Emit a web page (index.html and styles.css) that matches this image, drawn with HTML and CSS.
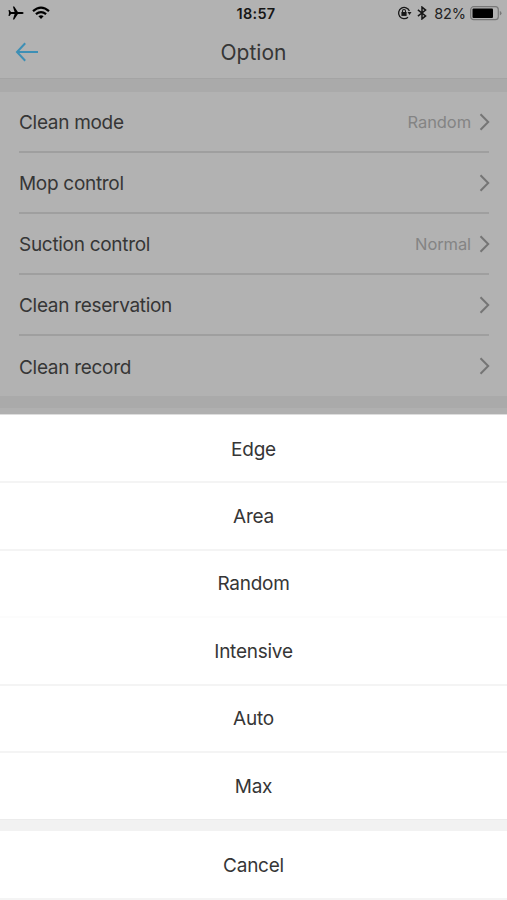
FILE: index.html
```
<!DOCTYPE html>
<html lang="en">
<head>
<meta charset="utf-8">
<meta name="viewport" content="width=device-width, initial-scale=1">
<title>Option</title>
<link rel="stylesheet" href="styles.css">
</head>
<body>
<div class="screen">
  <header class="header">
    <div class="status">
      <div class="status-left">
        <svg width="16" height="14" viewBox="0 0 16 14"><path d="M15.6 7q0-.9-1.5-.9H9.9L6.200.5H4.900L6.600 6.100H3L1.500 4H.5L1 7l-.5 3h1L3 7.900h3.600L4.900 13.500h1.300L9.900 7.900h4.200q1.500 0 1.500-.9z"/></svg>
        <svg width="18" height="14" viewBox="0 0 18 14" fill="none" stroke="#000" stroke-width="2.200"><path d="M1 5.100Q9-1.900 17 5.100M3.900 8.200q5.100-4.300 10.200 0"/><path d="M6.400 10.200q2.600-2 5.200 0L9 12.900z" fill="#000" stroke="none"/></svg>
      </div>
      <div class="clock">18:57</div>
      <div class="status-right">
        <svg class="lock" width="15" height="14" viewBox="0 0 15 14" fill="none" stroke="#161616" stroke-width="1.300"><path d="M12.400 5A5.600 5.600 0 1 0 11 11.200"/><path d="M10.500 6h4L12.500 9z" fill="#161616" stroke="none"/><path d="M4.400 6h5.200v3.900H4.400z" fill="#161616" stroke="none"/><path d="M5.500 6.300V5a1.500 1.500 0 0 1 3 0v1.300" stroke-width="1.100"/></svg>
        <svg class="bluetooth" width="10" height="14" viewBox="0 0 10 14" fill="none" stroke="#161616" stroke-width="1.500"><path d="M.9 3.900l7.700 6L5 12.900V1.100l3.600 3-7.700 6"/></svg>
        <span class="percent">82%</span>
        <svg class="battery" width="32" height="15" viewBox="0 0 32 15"><rect x=".7" y=".7" width="27.600" height="13" rx="3" fill="none" stroke="#777" stroke-width="1.200"/><rect x="2.500" y="2.500" width="20.500" height="9.500" rx="1"/><path d="M29.800 5q1.700.6 1.700 2.200t-1.700 2.200z" fill="#777"/></svg>
      </div>
    </div>
    <div class="nav">
      <svg class="back" width="24" height="20" viewBox="0 0 24 20"><path d="M23 10H2.500M10.200 1.300L2 10l8.200 8.700"/></svg>
      <h1 class="title">Option</h1>
    </div>
  </header>
  <main class="settings">
    <div class="row"><span class="label">Clean mode</span><span class="value">Random</span><svg class="chevron" width="11" height="18" viewBox="0 0 11 18"><path d="M1.500 1.300L9.200 9l-7.700 7.700"/></svg></div>
    <div class="row"><span class="label">Mop control</span><span class="value"></span><svg class="chevron" width="11" height="18" viewBox="0 0 11 18"><path d="M1.500 1.300L9.200 9l-7.700 7.700"/></svg></div>
    <div class="row"><span class="label">Suction control</span><span class="value">Normal</span><svg class="chevron" width="11" height="18" viewBox="0 0 11 18"><path d="M1.500 1.300L9.200 9l-7.700 7.700"/></svg></div>
    <div class="row"><span class="label">Clean reservation</span><span class="value"></span><svg class="chevron" width="11" height="18" viewBox="0 0 11 18"><path d="M1.500 1.300L9.200 9l-7.700 7.700"/></svg></div>
    <div class="row"><span class="label">Clean record</span><span class="value"></span><svg class="chevron" width="11" height="18" viewBox="0 0 11 18"><path d="M1.500 1.300L9.200 9l-7.700 7.700"/></svg></div>
  </main>
  <div class="peek"></div>
  <section class="sheet">
    <div class="choice first">Edge</div>
    <div class="choice">Area</div>
    <div class="choice faint">Random</div>
    <div class="choice">Intensive</div>
    <div class="choice">Auto</div>
    <div class="choice last">Max</div>
    <div class="cancel">Cancel</div>
  </section>
</div>
</body>
</html>
```
FILE: styles.css
```
* { box-sizing: border-box; }
body {
  margin: 0;
  background: #aaa;
  color: #363636;
  font-family: Inter, "Liberation Sans", sans-serif;
  font-size: 19px;
  letter-spacing: -.25px;
}
svg { display: block; flex: none; }
.screen {
  height: 900px;
  overflow: hidden;
  display: flex;
  flex-direction: column;
}
.header {
  height: 79px;
  background: #b2b2b2;
  border-bottom: 1px solid #a4a4a4;
}
.status {
  height: 26px;
  padding: 0 5px 0 8px;
  display: grid;
  grid-template-columns: 1fr auto 1fr;
  align-items: center;
}
.status-left { display: flex; gap: 8px; }
.clock {
  color: #161616;
  font-size: 14.500px;
  font-weight: 600;
  letter-spacing: .3px;
  padding: 1px 0 0 2px;
}
.status-right { display: flex; align-items: center; justify-content: flex-end; }
.bluetooth { margin: 0 7px 0 5px; }
.percent { color: #222; font-size: 14.500px; letter-spacing: -.1px; padding-top: 1px; margin-right: 4px; }
.nav {
  height: 52px;
  display: grid;
  grid-template-columns: 1fr auto 1fr;
  align-items: center;
  padding: 0 15px;
}
.back { fill: none; stroke: #3d8fb5; stroke-width: 2; }
.title {
  margin: 0;
  font-size: 21px;
  font-weight: 400;
  letter-spacing: 0;
}
.settings {
  margin-top: 13px;
  background: #b2b2b2;
  padding: 0 18px 0 19px;
}
.row {
  height: 61px;
  display: flex;
  align-items: center;
  border-bottom: 2px solid #9f9f9f;
}
.row:last-child { border-bottom: 0; height: 60px; }
.label { padding-top: 2px; letter-spacing: -.3px; }
.value {
  margin-left: auto;
  margin-right: 8px;
  color: #848484;
  font-size: 16.500px;
  letter-spacing: -.1px;
}
.chevron { fill: none; stroke: #757575; stroke-width: 2; margin-right: -1px; }
.peek { height: 18px; border-bottom: 6px solid #b0b0b0; }
.sheet { flex: 1; background: #f2f2f2; border-top: 1px solid #ddd; }
.choice, .cancel {
  display: flex;
  align-items: center;
  justify-content: center;
  height: 67.400px;
  padding-top: 1px;
  background: #fff;
  border-bottom: 2px solid #f4f4f4;
}
.first { height: 68.400px; padding-top: 2px; }
.faint { border-color: #fcfcfc; }
.last { height: 67px; border-bottom: 1px solid #ececec; }
.cancel { margin-top: 11px; height: 69px; padding-top: 3px; }
```
